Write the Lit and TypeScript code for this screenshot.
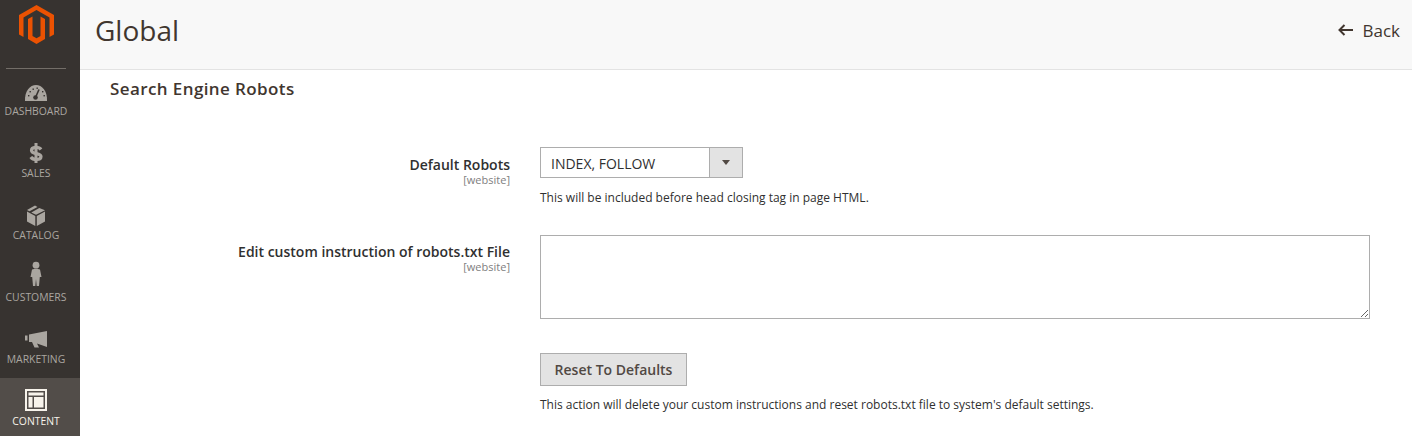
import { LitElement, html, css, svg } from "lit";
import { customElement } from "lit/decorators.js";

interface NavItem {
  label: string;
  icon: unknown;
  active?: boolean;
}

// icons share a 24 box; some stick out of it on purpose, the rows are a fixed 62px
const NAV_ITEMS: NavItem[] = [
  {
    label: "DASHBOARD",
    icon: svg`<path fill="#aaa6a0" d="M1 20C0.500 10 6 4 12 4S23.500 10 23 20Z"/>
      <path stroke="#373330" stroke-width="1.600" d="M11.500 16.500L15 8.500"/>
      <circle cx="11.500" cy="16.500" r="2.300" fill="#373330"/>
      <g fill="#373330"><rect x="4" y="14" width="1.400" height="1.400"/><rect x="5.500" y="10" width="1.400" height="1.400"/><rect x="8.500" y="7.500" width="1.400" height="1.400"/><rect x="12.500" y="6.500" width="1.400" height="1.400"/><rect x="18" y="10" width="1.400" height="1.400"/><rect x="19.500" y="14" width="1.400" height="1.400"/></g>`,
  },
  {
    label: "SALES",
    icon: svg`<path fill="none" stroke="#aaa6a0" stroke-width="3.200" d="M17 6.500C15 3.500 7.500 3.500 7.500 7.500C7.500 11.800 17 9.500 17 13.500C17 17.500 9 17.300 6.800 14"/>
      <rect x="10.500" y="0" width="3" height="20" fill="#aaa6a0"/>`,
  },
  {
    label: "CATALOG",
    icon: svg`<path fill="#aaa6a0" d="M3 6.500L11.300 11V21L3 16.500ZM21 6.500L12.800 11V21L21 16.500ZM3 5L11 0.500 13.500 2 5.500 6.300ZM7.300 7.500L15.300 3 21 5.200 12 9.800Z"/>`,
  },
  {
    label: "CUSTOMERS",
    icon: svg`<circle cx="12" cy="-1.800" r="3.400" fill="#aaa6a0"/>
      <path fill="#aaa6a0" d="M8 2.500Q12 1 16 2.500L17.500 10H15.800L15 19H12.700L12 12 11.300 19H9L8.200 10H6.500Z"/>`,
  },
  {
    label: "MARKETING",
    icon: svg`<path fill="#aaa6a0" d="M1 6.500H3.500V11.500H1ZM5 5.500L23 2V18L13 14.500L15 18.500H10.500L8 13H5Z"/>`,
  },
  {
    label: "CONTENT",
    active: true,
    icon: svg`<rect x="2" y="-1" width="20" height="20" fill="none" stroke="#f7f3eb" stroke-width="2"/>
      <rect x="4.500" y="1.500" width="15" height="3" fill="#f7f3eb"/>
      <rect x="4.500" y="6" width="4" height="10.500" fill="#f7f3eb"/>
      <rect x="10" y="6" width="9.500" height="10.500" fill="#f7f3eb"/>`,
  },
];

@customElement("app-root")
export class AppRoot extends LitElement {
  static styles = css`
    :host {
      display: block;
      height: 436px;
      overflow: hidden;
      font-family: "Open Sans", sans-serif;
      color: #303030;
    }
    .page {
      display: flex;
      height: 436px;
    }
    .sidebar {
      width: 80px;
      flex: none;
      box-sizing: border-box;
      padding-right: 8px;
      background: #373330;
      position: relative;
    }
    .logo {
      height: 69px;
      margin: 0 6px;
      border-bottom: 1px solid #736e68;
      display: flex;
      justify-content: center;
      padding-top: 5px;
      box-sizing: border-box;
    }
    .nav {
      padding-top: 12px;
      display: flex;
      flex-direction: column;
    }
    .nav-item {
      height: 62px;
      flex: none;
      display: flex;
      flex-direction: column;
      align-items: center;
      color: #aaa6a0;
      font-size: 10.4px;
      line-height: 14px;
    }
    .nav-item svg {
      display: block;
      height: 24px;
      width: 24px;
      margin-bottom: -1px;
      overflow: visible;
    }
    .nav-item.active {
      background: #524d49;
      color: #f7f3eb;
      margin: -13px -8px 0 0;
      padding: 13px 8px 0 0;
      height: 62px;
    }
    .main {
      flex: 1;
      min-width: 0;
    }
    .header {
      height: 70px;
      box-sizing: border-box;
      background: #f8f8f8;
      border-bottom: 1px solid #e3e3e3;
      display: flex;
      align-items: center;
      justify-content: space-between;
      padding: 0 12px 9px 15px;
    }
    h1 {
      margin: 0;
      font-size: 28px;
      font-weight: 400;
      color: #41362f;
      line-height: 36px;
    }
    .back {
      display: flex;
      align-items: center;
      gap: 9px;
      font-size: 17px;
      color: #41362f;
    }
    .content {
      padding: 8px 42px 0 30px;
    }
    h2 {
      margin: 0 0 47px;
      font-size: 17px;
      font-weight: 600;
      line-height: 22px;
      letter-spacing: 0.4px;
      color: #41362f;
    }
    .row {
      display: grid;
      grid-template-columns: 400px 1fr;
      column-gap: 30px;
      margin-bottom: 29px;
    }
    .row.tall {
      margin-bottom: 34px;
    }
    .label {
      text-align: right;
      padding-top: 8px;
      font-size: 14px;
      font-weight: 600;
      line-height: 20px;
      color: #303030;
    }
    .row.tall .label {
      padding-top: 7px;
    }
    .scope {
      margin-top: -1px;
      font-size: 11px;
      font-weight: 400;
      line-height: 11px;
      color: #808080;
    }
    .select {
      display: flex;
      width: 203px;
      height: 31px;
      box-sizing: border-box;
      border: 1px solid #adadad;
      font-size: 14px;
      line-height: 31px;
    }
    .select span {
      flex: 1;
      padding-left: 10px;
    }
    .arrow {
      width: 33px;
      flex: none;
      box-sizing: border-box;
      background: #e3e3e3;
      border-left: 1px solid #adadad;
      display: flex;
      align-items: center;
      justify-content: center;
    }
    .arrow::after {
      content: "";
      border: 4px solid transparent;
      border-top: 5px solid #514943;
      border-bottom: 0;
    }
    .note {
      margin: 11px 0 0;
      font-size: 12px;
      line-height: 17px;
      color: #303030;
    }
    button + .note {
      margin-top: 10px;
    }
    textarea {
      display: block;
      width: 830px;
      height: 84px;
      box-sizing: border-box;
      border: 1px solid #adadad;
      margin: 0;
      padding: 0;
      outline: none;
    }
    button {
      display: block;
      width: 147px;
      height: 33px;
      box-sizing: border-box;
      border: 1px solid #adadad;
      background: #e3e3e3;
      font-family: inherit;
      font-size: 14px;
      font-weight: 600;
      color: #514943;
      padding: 0;
    }
  `;

  render() {
    return html`
      <div class="page">
        <aside class="sidebar">
          <div class="logo">
            <svg width="35" height="39" viewBox="0 0 35 39">
              <path fill="#eb5202" d="M17.500 0L35 10V29.500L30.500 32V12.500L17.500 5 4.500 12.500V32L0 29.500V10Z"/>
              <path fill="#eb5202" d="M9 14L13.500 11.500V31L17.500 33.300 21.500 31V11.500L26 14V34L17.500 39 9 34Z"/>
            </svg>
          </div>
          <nav class="nav">
            ${NAV_ITEMS.map(
              (item) => html`
                <div class="nav-item ${item.active ? "active" : ""}">
                  <svg viewBox="0 0 24 24">${item.icon}</svg>
                  ${item.label}
                </div>
              `
            )}
          </nav>
        </aside>
        <main class="main">
          <header class="header">
            <h1>Global</h1>
            <div class="back">
              <svg width="15" height="12" viewBox="0 0 15 12">
                <path fill="none" stroke="#41362f" stroke-width="2" d="M15 6H2M6.500 1L1.500 6L6.500 11"/>
              </svg>
              Back
            </div>
          </header>
          <div class="content">
            <h2>Search Engine Robots</h2>
            <div class="row">
              <div class="label">
                Default Robots
                <div class="scope">[website]</div>
              </div>
              <div>
                <div class="select">
                  <span>INDEX, FOLLOW</span>
                  <div class="arrow"></div>
                </div>
                <p class="note">This will be included before head closing tag in page HTML.</p>
              </div>
            </div>
            <div class="row tall">
              <div class="label">
                Edit custom instruction of robots.txt File
                <div class="scope">[website]</div>
              </div>
              <textarea></textarea>
            </div>
            <div class="row">
              <div></div>
              <div>
                <button>Reset To Defaults</button>
                <p class="note">This action will delete your custom instructions and reset robots.txt file to system's default settings.</p>
              </div>
            </div>
          </div>
        </main>
      </div>
    `;
  }
}
